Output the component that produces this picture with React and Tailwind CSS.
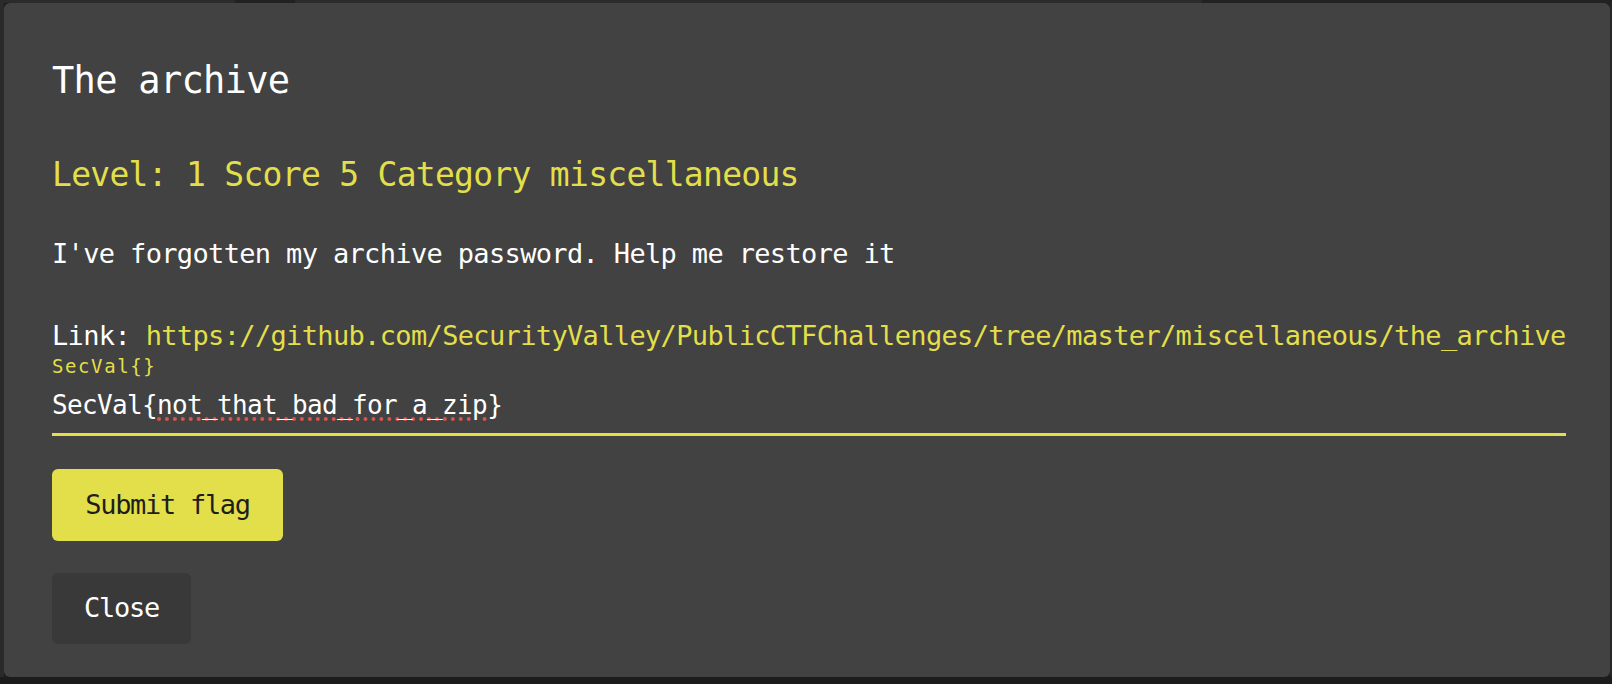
export default function App() {
  const url = 'https://github.com/SecurityValley/PublicCTFChallenges/tree/master/miscellaneous/the_archive';

  return (
    <div className="w-[1612px] h-[684px] bg-[#1c1c1c] flex flex-col overflow-hidden font-['DejaVu_Sans_Mono',monospace]">
      {/* page behind the overlay */}
      <div className="h-[3px] flex shrink-0">
        <div className="w-[235px] bg-[#2b2b2b]" />
        <div className="w-[60px] bg-[#212121]" />
        <div className="w-[907px] bg-[#2b2b2b]" />
        <div className="flex-1 bg-[#222]" />
      </div>
      <div className="flex h-[674px] shrink-0">
        <div className="w-[4px] bg-[#2a2a2a]" />

        {/* modal */}
        <div className="w-[1606px] bg-[#424242] rounded-[6px] pl-[48px] pr-[44px] pt-[54px] text-white">
          <h2 className="text-[37px] leading-[48px] tracking-[-0.7px]">The archive</h2>

          <p className="mt-[48px] text-[33px] leading-[44px] tracking-[-0.72px] text-[#e2df4a]">
            Level: 1 Score 5 Category miscellaneous
          </p>

          <p className="mt-[39px] text-[27px] leading-[36px] tracking-[-0.65px]">
            I've forgotten my archive password. Help me restore it
          </p>

          <p className="mt-[46px] text-[27px] leading-[36px] tracking-[-0.65px] whitespace-nowrap">
            Link: <a className="text-[#e2df4a]">{url}</a>
          </p>

          <p className="text-[19px] leading-[24px] tracking-[1.6px] text-[#e2df4a]">SecVal{'{}'}</p>

          <div className="mt-[9px] pb-[10px] border-b-[3px] border-[#e2df4a]">
            <div className="text-[26px] leading-[36px] tracking-[-0.65px] whitespace-nowrap">
              SecVal{'{'}
              <span className="underline decoration-dotted decoration-[#d9544f] decoration-[4px] underline-offset-[3px]">
                not_that_bad_for_a_zip
              </span>
              {'}'}
            </div>
          </div>

          <div className="mt-[33px] flex flex-col items-start">
            <button className="h-[72px] w-[231px] rounded-[6px] bg-[#e2df4a] text-[#1e1e1e] text-[27px] tracking-[-1.3px]">
              Submit flag
            </button>
            <button className="mt-[32px] h-[71px] w-[139px] rounded-[6px] bg-[#393939] text-white text-[27px] tracking-[-1.3px]">
              Close
            </button>
          </div>
        </div>

        <div className="flex-1 bg-[#262626]" />
      </div>
    </div>
  );
}
